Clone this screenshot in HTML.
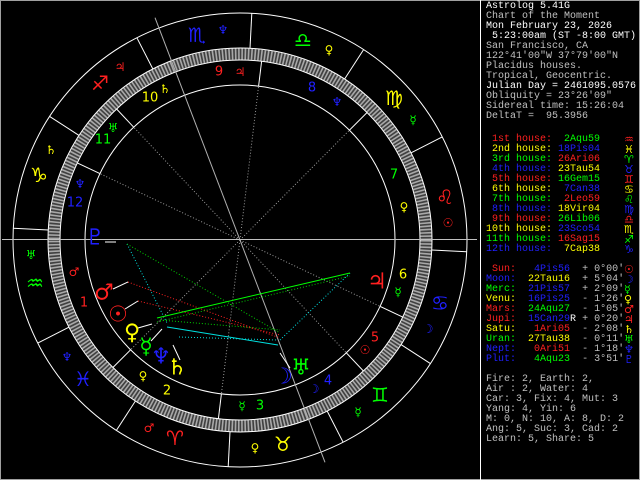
<!DOCTYPE html>
<html><head><meta charset="utf-8"><style>
html,body{margin:0;padding:0;background:#000;}
#w{position:relative;width:640px;height:480px;overflow:hidden;background:#000;}
.t{position:absolute;left:486px;font-family:"Liberation Mono","DejaVu Sans Mono",monospace;font-size:10px;line-height:10px;white-space:pre;}
.g{position:absolute;left:624px;font-family:"DejaVu Sans",sans-serif;font-size:11px;line-height:10px;}
.W{color:#fff}.G{color:#c0c0c0}.R{color:#ff2020}.Y{color:#ffff00}.N{color:#00ff00}.B{color:#2020ff}
svg text{font-family:"DejaVu Sans",sans-serif;text-anchor:middle;dominant-baseline:central;}
</style></head><body><div id="w">
<svg width="640" height="480" style="position:absolute;left:0;top:0">
<rect x="0.5" y="0.5" width="639" height="479" fill="none" stroke="#a0a0a0"/>
<line x1="480.5" y1="0" x2="480.5" y2="480" stroke="#fff"/>
<circle cx="240" cy="240" r="227" fill="none" stroke="#fff"/>
<circle cx="240" cy="240" r="186" fill="none" stroke="#404040" stroke-width="12"/>
<circle cx="240" cy="240" r="186" fill="none" stroke="#a8a8a8" stroke-width="11" stroke-dasharray="1.6 1.65"/>
<circle cx="240" cy="240" r="192" fill="none" stroke="#fff"/>
<circle cx="240" cy="240" r="180" fill="none" stroke="#fff"/>
<circle cx="240" cy="240" r="155" fill="none" stroke="#fff"/>
<g stroke="#fff">
<line x1="48.3" y1="230" x2="13.3" y2="228.2"/>
<line x1="68.9" y1="327.2" x2="37.8" y2="343.1"/>
<line x1="135.4" y1="401" x2="116.4" y2="430.4"/>
<line x1="230" y1="431.7" x2="228.2" y2="466.7"/>
<line x1="327.2" y1="411.1" x2="343.1" y2="442.2"/>
<line x1="401" y1="344.6" x2="430.4" y2="363.6"/>
<line x1="431.7" y1="250" x2="466.7" y2="251.8"/>
<line x1="411.1" y1="152.8" x2="442.2" y2="136.9"/>
<line x1="344.6" y1="79" x2="363.6" y2="49.6"/>
<line x1="250" y1="48.3" x2="251.8" y2="13.3"/>
<line x1="152.8" y1="68.9" x2="136.9" y2="37.8"/>
<line x1="79" y1="135.4" x2="49.6" y2="116.4"/>
<line x1="130.6" y1="349.8" x2="112.9" y2="367.5"/>
<line x1="221.4" y1="393.9" x2="218.4" y2="418.7"/>
<line x1="346.3" y1="352.8" x2="363.4" y2="371"/>
<line x1="380.1" y1="306.4" x2="402.7" y2="317.1"/>
<line x1="349.4" y1="130.2" x2="367.1" y2="112.5"/>
<line x1="258.6" y1="86.1" x2="261.6" y2="61.3"/>
<line x1="133.7" y1="127.2" x2="116.6" y2="109"/>
<line x1="99.9" y1="173.6" x2="77.3" y2="162.9"/>
</g>
<g stroke="#999" stroke-dasharray="1 2">
<line x1="240" y1="240" x2="130.6" y2="349.8"/>
<line x1="240" y1="240" x2="221.4" y2="393.9"/>
<line x1="240" y1="240" x2="346.3" y2="352.8"/>
<line x1="240" y1="240" x2="380.1" y2="306.4"/>
<line x1="240" y1="240" x2="349.4" y2="130.2"/>
<line x1="240" y1="240" x2="258.6" y2="86.1"/>
<line x1="240" y1="240" x2="133.7" y2="127.2"/>
<line x1="240" y1="240" x2="99.9" y2="173.6"/>
</g>
<line x1="2" y1="239.5" x2="477" y2="239.5" stroke="#c0c0c0"/>
<line x1="155" y1="17.7" x2="325" y2="462.3" stroke="#b0b0b0"/>
<g stroke-dasharray="1 2" fill="none">
<line x1="127" y1="244" x2="167" y2="323" stroke="#00e0e0"/>
<line x1="179" y1="337" x2="278" y2="340" stroke="#00e0e0"/>
<line x1="280" y1="340" x2="350" y2="273" stroke="#00e0e0"/>
<line x1="128" y1="282" x2="280" y2="338" stroke="#ff2020"/>
<line x1="138" y1="301" x2="280" y2="335" stroke="#ff2020"/>
<line x1="127" y1="244" x2="280" y2="333" stroke="#00d000"/>
<line x1="157" y1="322" x2="350" y2="276" stroke="#00d000"/>
<line x1="160" y1="320" x2="280" y2="330" stroke="#00d000"/>
</g>
<line x1="157" y1="318" x2="350" y2="273" stroke="#00ff00"/>
<line x1="167" y1="327" x2="278" y2="345" stroke="#00e0e0"/>
<g stroke="#fff">
<line x1="105" y1="242" x2="116" y2="242"/>
<line x1="113" y1="289" x2="128" y2="282"/>
<line x1="125" y1="309" x2="138" y2="301"/>
<line x1="138" y1="328" x2="152" y2="324"/>
<line x1="151" y1="341" x2="162" y2="329"/>
<line x1="173" y1="345" x2="180" y2="360"/>
<line x1="280" y1="353" x2="290" y2="368"/>
</g>
<g font-size="20">
<text x="197" y="35" fill="#2020ff">♏</text>
<text x="303" y="40" fill="#00ff00">♎</text>
<text x="394" y="98" fill="#ffff00">♍</text>
<text x="445" y="197" fill="#ff2020">♌</text>
<text x="440" y="303" fill="#2020ff">♋</text>
<text x="380" y="395" fill="#00ff00">♊</text>
<text x="283" y="444" fill="#ffff00">♉</text>
<text x="175" y="438" fill="#ff2020">♈</text>
<text x="83" y="379" fill="#2020ff">♓</text>
<text x="35" y="283" fill="#00ff00">♒</text>
<text x="39" y="175" fill="#ffff00">♑</text>
<text x="100" y="83" fill="#ff2020">♐</text>
</g>
<g font-size="12">
<text x="223" y="30" fill="#2020ff">♆</text>
<text x="120" y="67" fill="#ff2020">♃</text>
<text x="329" y="50" fill="#ffff00">♀</text>
<text x="413" y="120" fill="#00ff00">☿</text>
<text x="448" y="223" fill="#ff2020">☉</text>
<text x="428" y="329" fill="#2020ff">☽</text>
<text x="358" y="412" fill="#00ff00">☿</text>
<text x="255" y="448" fill="#ffff00">♀</text>
<text x="149" y="428" fill="#ff2020">♂</text>
<text x="67" y="357" fill="#2020ff">♆</text>
<text x="31" y="255" fill="#00ff00">♅</text>
<text x="51" y="150" fill="#ffff00">♄</text>
<text x="165" y="89" fill="#ffff00">♄</text>
<text x="113" y="128" fill="#00ff00">♅</text>
<text x="80" y="184" fill="#2020ff">♆</text>
<text x="240" y="72" fill="#ff2020">♃</text>
<text x="337" y="102" fill="#2020ff">♆</text>
<text x="404" y="207" fill="#ffff00">♀</text>
<text x="398" y="292" fill="#00ff00">☿</text>
<text x="365" y="350" fill="#ff2020">☉</text>
<text x="314" y="389" fill="#2020ff">☽</text>
<text x="242" y="406" fill="#00ff00">☿</text>
<text x="143" y="376" fill="#ffff00">♀</text>
<text x="74" y="272" fill="#ff2020">♂</text>
</g>
<g font-size="13" font-family="Liberation Sans">
<text x="150" y="98" fill="#ffff00">10</text>
<text x="103" y="140" fill="#00ff00">11</text>
<text x="75" y="203" fill="#2020ff">12</text>
<text x="219" y="72" fill="#ff2020">9</text>
<text x="312" y="88" fill="#2020ff">8</text>
<text x="394" y="175" fill="#00ff00">7</text>
<text x="403" y="275" fill="#ffff00">6</text>
<text x="375" y="338" fill="#ff2020">5</text>
<text x="328" y="381" fill="#2020ff">4</text>
<text x="260" y="406" fill="#00ff00">3</text>
<text x="167" y="391" fill="#ffff00">2</text>
<text x="84" y="303" fill="#ff2020">1</text>
</g>
<g font-size="22">
<text x="95" y="238" fill="#2020ff">♇</text>
<text x="104" y="293" fill="#ff2020">♂</text>
<text x="118" y="315" fill="#ff2020">☉</text>
<text x="132" y="333" fill="#ffff00">♀</text>
<text x="146" y="347" fill="#00ff00">☿</text>
<text x="161" y="357" fill="#2020ff">♆</text>
<text x="177" y="368" fill="#ffff00">♄</text>
<text x="283" y="377" fill="#2020ff">☽</text>
<text x="301" y="368" fill="#00ff00">♅</text>
<text x="377" y="282" fill="#ff2020">♃</text>
</g>
</svg>
<div class="t W" style="top:2px">Astrolog 5.41G</div>
<div class="t G" style="top:12px">Chart of the Moment</div>
<div class="t W" style="top:22px">Mon February 23, 2026</div>
<div class="t W" style="top:32px"> 5:23:00am (ST -8:00 GMT)</div>
<div class="t G" style="top:42px">San Francisco, CA</div>
<div class="t G" style="top:52px">122°41'00"W 37°79'00"N</div>
<div class="t G" style="top:62px">Placidus houses.</div>
<div class="t G" style="top:72px">Tropical, Geocentric.</div>
<div class="t W" style="top:82px">Julian Day = 2461095.0576</div>
<div class="t G" style="top:92px">Obliquity = 23°26'09"</div>
<div class="t G" style="top:102px">Sidereal time: 15:26:04</div>
<div class="t G" style="top:112px">DeltaT =  95.3956</div>

<div class="t" style="top:135px"><span class="R"> 1st house:</span>  <span class="N">2Aqu59</span></div>
<div class="t" style="top:145px"><span class="Y"> 2nd house:</span> <span class="B">18Pis04</span></div>
<div class="t" style="top:155px"><span class="N"> 3rd house:</span> <span class="R">26Ari06</span></div>
<div class="t" style="top:165px"><span class="B"> 4th house:</span> <span class="Y">23Tau54</span></div>
<div class="t" style="top:175px"><span class="R"> 5th house:</span> <span class="N">16Gem15</span></div>
<div class="t" style="top:185px"><span class="Y"> 6th house:</span>  <span class="B">7Can38</span></div>
<div class="t" style="top:195px"><span class="N"> 7th house:</span>  <span class="R">2Leo59</span></div>
<div class="t" style="top:205px"><span class="B"> 8th house:</span> <span class="Y">18Vir04</span></div>
<div class="t" style="top:215px"><span class="R"> 9th house:</span> <span class="N">26Lib06</span></div>
<div class="t" style="top:225px"><span class="Y">10th house:</span> <span class="B">23Sco54</span></div>
<div class="t" style="top:235px"><span class="N">11th house:</span> <span class="R">16Sag15</span></div>
<div class="t" style="top:245px"><span class="B">12th house:</span>  <span class="Y">7Cap38</span></div>
<div class="g R" style="top:135px">♒</div><div class="g Y" style="top:145px">♓</div><div class="g N" style="top:155px">♈</div>
<div class="g B" style="top:165px">♉</div><div class="g R" style="top:175px">♊</div><div class="g Y" style="top:185px">♋</div>
<div class="g N" style="top:195px">♌</div><div class="g B" style="top:205px">♍</div><div class="g R" style="top:215px">♎</div>
<div class="g Y" style="top:225px">♏</div><div class="g N" style="top:235px">♐</div><div class="g B" style="top:245px">♑</div>

<div class="t" style="top:265px"><span class="R"> Sun:</span>   <span class="B">4Pis56</span>  <span class="G">+ 0°00'</span></div>
<div class="t" style="top:275px"><span class="B">Moon:</span>  <span class="Y">22Tau16</span>  <span class="G">+ 5°04'</span></div>
<div class="t" style="top:285px"><span class="N">Merc:</span>  <span class="B">21Pis57</span>  <span class="G">+ 2°09'</span></div>
<div class="t" style="top:295px"><span class="Y">Venu:</span>  <span class="B">16Pis25</span>  <span class="G">- 1°26'</span></div>
<div class="t" style="top:305px"><span class="R">Mars:</span>  <span class="N">24Aqu27</span>  <span class="G">- 1°05'</span></div>
<div class="t" style="top:315px"><span class="R">Jupi:</span>  <span class="B">15Can29</span><span class="W">R</span> <span class="G">+ 0°20'</span></div>
<div class="t" style="top:325px"><span class="Y">Satu:</span>   <span class="R">1Ari05</span>  <span class="G">- 2°08'</span></div>
<div class="t" style="top:335px"><span class="N">Uran:</span>  <span class="Y">27Tau38</span>  <span class="G">- 0°11'</span></div>
<div class="t" style="top:345px"><span class="B">Nept:</span>   <span class="R">0Ari51</span>  <span class="G">- 1°18'</span></div>
<div class="t" style="top:355px"><span class="B">Plut:</span>   <span class="N">4Aqu23</span>  <span class="G">- 3°51'</span></div>
<div class="g R" style="top:265px">☉</div><div class="g B" style="top:275px">☽</div><div class="g N" style="top:285px">☿</div>
<div class="g Y" style="top:295px">♀</div><div class="g R" style="top:305px">♂</div><div class="g R" style="top:315px">♃</div>
<div class="g Y" style="top:325px">♄</div><div class="g N" style="top:335px">♅</div><div class="g B" style="top:345px">♆</div>
<div class="g B" style="top:355px">♇</div>

<div class="t G" style="top:375px">Fire: 2, Earth: 2,</div>
<div class="t G" style="top:385px">Air : 2, Water: 4</div>
<div class="t G" style="top:395px">Car: 3, Fix: 4, Mut: 3</div>
<div class="t G" style="top:405px">Yang: 4, Yin: 6</div>
<div class="t G" style="top:415px">M: 0, N: 10, A: 8, D: 2</div>
<div class="t G" style="top:425px">Ang: 5, Suc: 3, Cad: 2</div>
<div class="t G" style="top:435px">Learn: 5, Share: 5</div>
</div></body></html>
